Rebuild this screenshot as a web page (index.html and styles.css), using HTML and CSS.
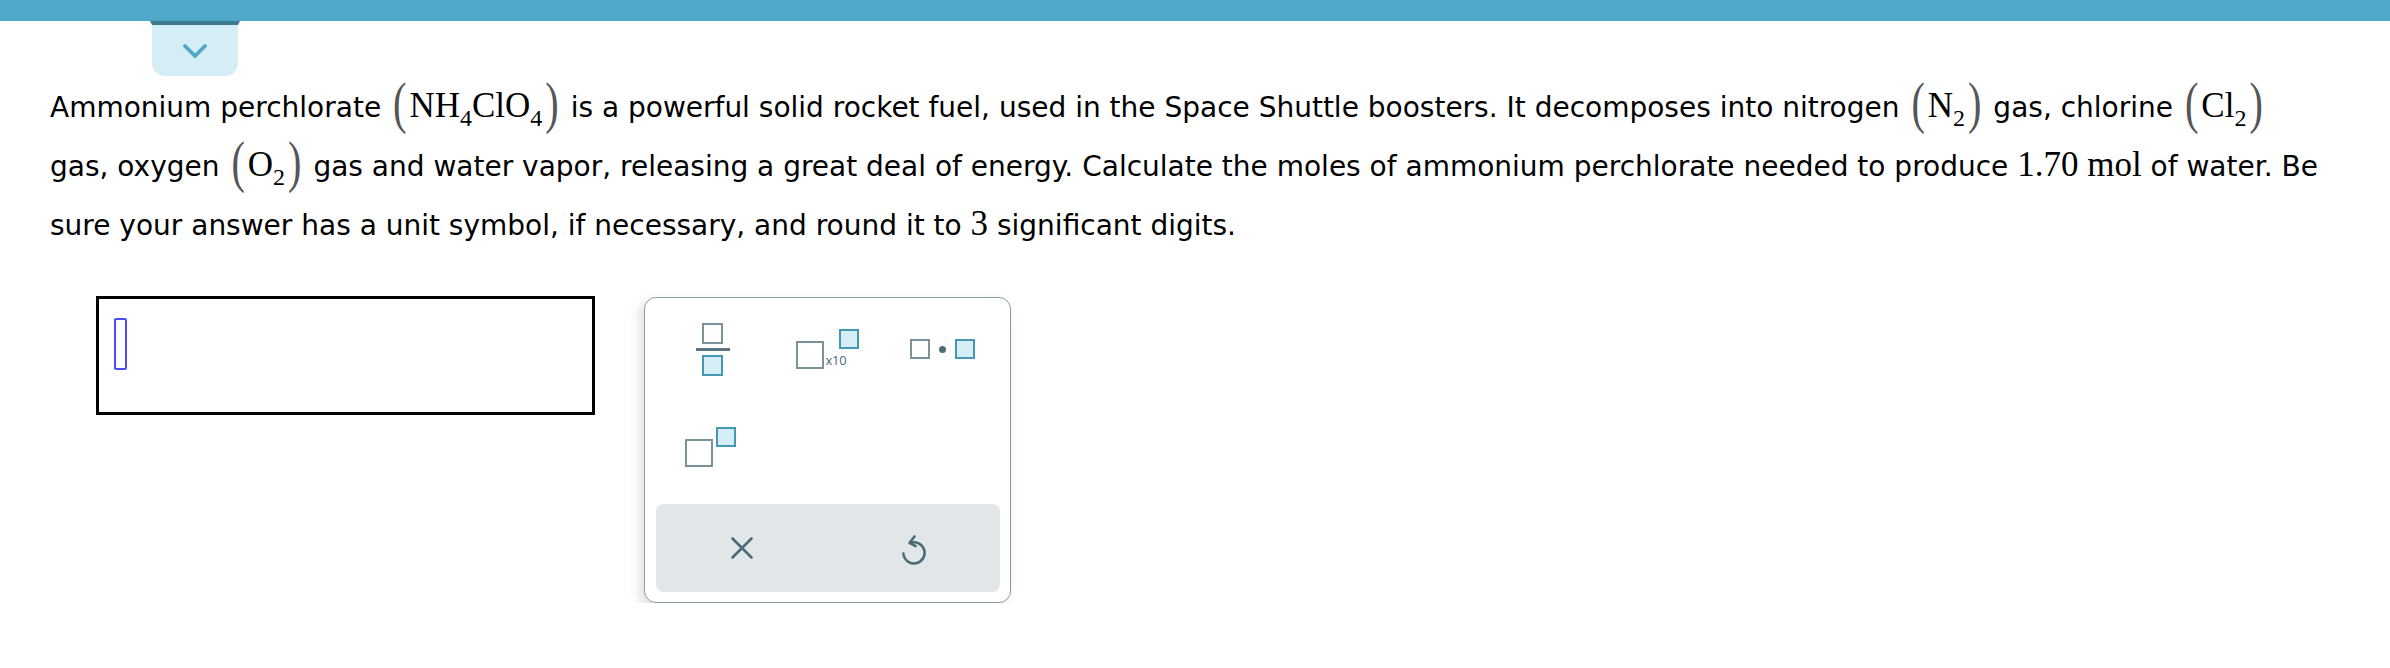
FILE: index.html
```html
<!DOCTYPE html>
<html lang="en">
<head>
<meta charset="utf-8">
<title>Question</title>
<link rel="stylesheet" href="styles.css">
</head>
<body>
<div class="topbar"></div>
<div class="tab">
  <svg class="chev" width="26" height="16" viewBox="0 0 26 16"><polyline points="3,3 13,13 23,3" fill="none" stroke="#4fa8c7" stroke-width="3.8" stroke-linecap="round" stroke-linejoin="round"/></svg>
</div>
<p class="question">Ammonium perchlorate <span class="math"><span class="paren">(</span>NH<sub>4</sub>ClO<sub>4</sub><span class="paren">)</span></span> is a powerful solid rocket fuel, used in the Space Shuttle boosters. It decomposes into nitrogen <span class="math"><span class="paren">(</span>N<sub>2</sub><span class="paren">)</span></span> gas, chlorine <span class="math"><span class="paren">(</span>Cl<sub>2</sub><span class="paren">)</span></span><br>gas, oxygen <span class="math"><span class="paren">(</span>O<sub>2</sub><span class="paren">)</span></span> gas and water vapor, releasing a great deal of energy. Calculate the moles of ammonium perchlorate needed to produce <span class="math num">1.70 <span class="unit">mol</span></span> of water. Be<br>sure your answer has a unit symbol, if necessary, and round it to <span class="math num">3</span> significant digits.</p>
<div class="answer-row">
  <div class="answer-box"><span class="cursor"></span></div>
  <div class="palette">
    <div class="keys">
      <button class="key" aria-label="fraction">
        <span class="frac">
          <span class="sq s21"></span>
          <span class="bar"></span>
          <span class="sq s21 blue"></span>
        </span>
      </button>
      <button class="key" aria-label="times ten to the power">
        <span class="sci">
          <span class="sq s28 base"></span>
          <span class="x10">x10</span>
          <span class="sq s20 blue sup"></span>
        </span>
      </button>
      <button class="key" aria-label="multiply">
        <span class="dotop">
          <span class="sq s20"></span>
          <span class="dot"></span>
          <span class="sq s20 blue"></span>
        </span>
      </button>
      <button class="key" aria-label="superscript">
        <span class="pow">
          <span class="sq s28 base2"></span>
          <span class="sq s20 blue"></span>
        </span>
      </button>
    </div>
    <div class="actions">
      <button class="act" aria-label="clear">
        <svg width="24" height="24" viewBox="0 0 24 24"><path d="M2.5 2.5L21.5 21.5M21.5 2.5L2.5 21.5" stroke="#4b6b78" stroke-width="2.6" stroke-linecap="round" fill="none"/></svg>
      </button>
      <button class="act" aria-label="undo">
        <svg width="26" height="33" viewBox="0 0 26 33"><path d="M9 11 A 10.6 10.6 0 1 1 2.4 21.5" stroke="#4b6b78" stroke-width="2.6" stroke-linecap="round" fill="none"/><path d="M13.5 4.5 L8.6 10.8 L14.6 14.2" stroke="#4b6b78" stroke-width="2.6" stroke-linecap="round" stroke-linejoin="round" fill="none"/></svg>
      </button>
    </div>
  </div>
</div>
</body>
</html>
```

FILE: styles.css
```css
* { box-sizing: border-box; }

body {
  margin: 0;
  background: #fff;
  font-family: "DejaVu Sans", Verdana, sans-serif;
  color: #000;
}

.topbar {
  height: 21px;
  background: #4fa8c7;
}

.tab {
  position: relative;
  margin-left: 152px;
  width: 86px;
  height: 55px;
  background: #d5edf4;
  border-radius: 0 0 13px 13px;
  display: flex;
  align-items: center;
  justify-content: center;
}

.tab::before {
  content: "";
  position: absolute;
  top: 0;
  left: -2px;
  right: -2px;
  height: 4px;
  background: #3d7c8f;
  clip-path: polygon(0 0, 100% 0, calc(100% - 2px) 100%, 2px 100%);
}

.chev { margin-top: 4px; }

.question {
  margin: 2px 0 0 50px;
  font-size: 28px;
  line-height: 59px;
  white-space: nowrap;
}

.math {
  font-family: "Liberation Serif", "Times New Roman", serif;
  font-size: 35px;
  line-height: 1;
}

.paren {
  display: inline-block;
  font-size: 1.15em;
  transform: scaleY(1.4);
  color: #555;
  margin: 0 3px;
}

.math sub {
  font-size: 24px;
  line-height: 0;
  vertical-align: -9px;
}

.answer-row {
  display: flex;
  align-items: flex-start;
  gap: 49px;
  margin: 41px 0 0 96px;
}

.answer-box {
  width: 499px;
  height: 119px;
  border: 3px solid #000;
  padding: 19px 0 0 15px;
}

.cursor {
  display: block;
  width: 13px;
  height: 52px;
  border: 2px solid #4a4aff;
  border-radius: 2px;
}

.palette {
  margin-top: 1px;
  width: 367px;
  height: 306px;
  border: 1.5px solid #8a9ea6;
  border-radius: 12px;
  background: #fff;
  box-shadow: -4px 5px 12px rgba(60, 80, 90, 0.18);
  padding: 2px 10.5px 10px;
  display: flex;
  flex-direction: column;
}

.keys {
  display: grid;
  grid-template-columns: repeat(3, 1fr);
  grid-auto-rows: 98px;
  height: 202px;
  align-content: start;
}

button {
  border: 0;
  background: none;
  padding: 0;
  margin: 0;
  font: inherit;
  cursor: pointer;
}

.key {
  display: flex;
  align-items: center;
  justify-content: center;
}

.sq {
  display: block;
  border: 2.5px solid #7b929b;
  background: #fff;
}
.sq.blue {
  border-color: #4598b4;
  background: #d5edf4;
}
.s21 { width: 21px; height: 21px; }
.s20 { width: 20px; height: 20px; }
.s28 { width: 28px; height: 28px; }

.frac {
  display: flex;
  flex-direction: column;
  align-items: center;
  gap: 4px;
}
.frac .bar {
  display: block;
  width: 34px;
  height: 3px;
  background: #5b7682;
}

.sci {
  display: flex;
  align-items: flex-start;
  height: 40px;
}
.sci .base { margin-top: 12px; }
.sci .x10 {
  margin-top: 25px;
  margin-left: 2px;
  font-family: "Open Sans", "DejaVu Sans", sans-serif;
  font-size: 13px;
  line-height: 1;
  color: #4b6b78;
  letter-spacing: -0.3px;
}
.sci .sup { margin-left: -7px; }

.dotop {
  display: flex;
  align-items: center;
  gap: 9px;
}
.dotop .dot {
  width: 7px;
  height: 7px;
  border-radius: 50%;
  background: #4f6d79;
}

.pow {
  display: flex;
  align-items: flex-start;
  gap: 3px;
  margin-left: -4px;
}
.pow .base2 { margin-top: 12px; }

.actions {
  margin-top: auto;
  height: 88px;
  background: #e1e6e9;
  border-radius: 8px;
  display: grid;
  grid-template-columns: 1fr 1fr;
}

.act {
  display: flex;
  align-items: center;
  justify-content: center;
}
```
